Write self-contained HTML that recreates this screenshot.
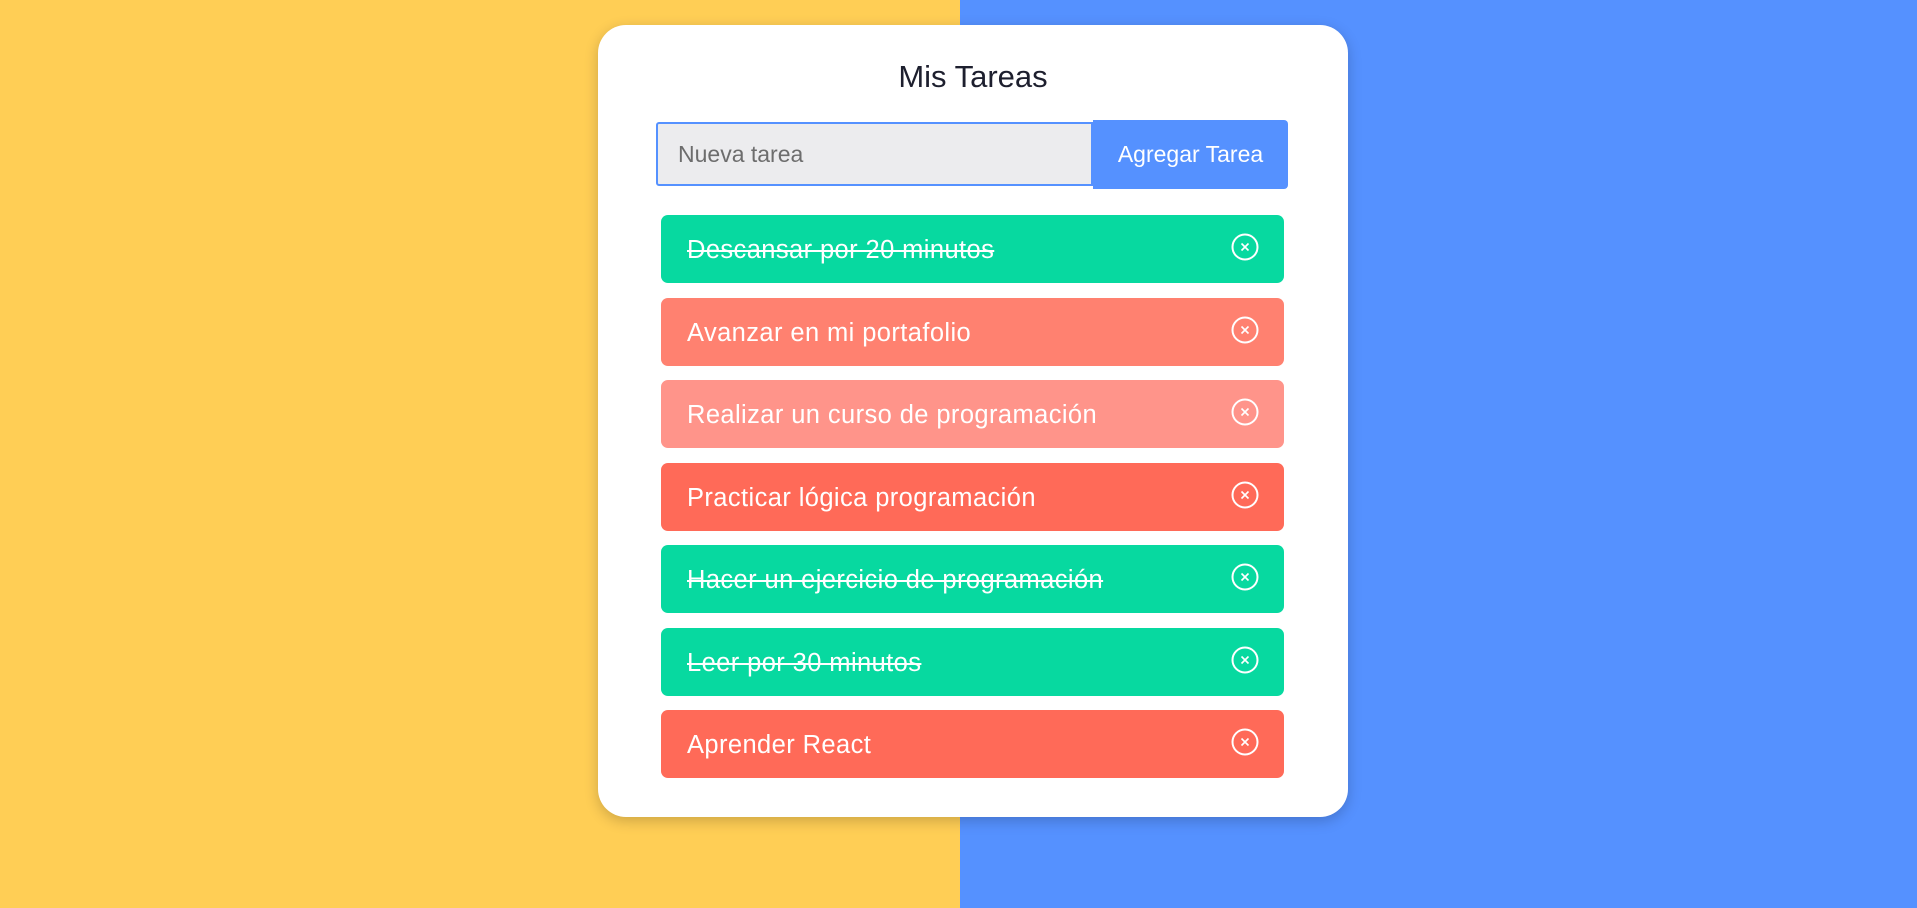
<!DOCTYPE html>
<html><head><meta charset="utf-8"><style>
*{box-sizing:border-box;margin:0;padding:0}
body{width:1917px;height:908px;overflow:hidden;background:linear-gradient(90deg,#ffce55 0 960px,#5591ff 960px);font-family:"Liberation Sans",sans-serif;position:relative}
.card{position:absolute;left:598px;top:25px;width:750px;height:792px;background:#fff;border-radius:28px;box-shadow:0 4px 14px rgba(0,0,0,.2)}
h1{position:absolute;top:34px;left:0;width:100%;text-align:center;font-weight:normal;font-size:31px;color:#1d1f2e}
.inp{position:absolute;left:58px;top:97px;width:437px;height:64px;background:#ececee;border:2px solid #5591ff;border-radius:3px 0 0 3px;font-size:23px;color:#6d6d6d;padding:17px 0 0 20px}
.btn{position:absolute;left:495px;top:95px;width:195px;height:69px;background:#5591ff;border-radius:0 4px 4px 0;color:#fff;font-size:23px;text-align:center;line-height:69px}
.t{position:absolute;left:63px;width:623px;height:68px;border-radius:7px;color:#fff;font-size:25.5px;letter-spacing:0.4px;padding:0 0 0 26px;line-height:70px}
.t s{text-decoration-thickness:2px}
.t svg{position:absolute;right:25px;top:18px}
.g{background:#07d9a0}.a{background:#ff8170}.b{background:#ff948a}.c{background:#ff6a58}
</style></head><body>
<div class="card">
<h1>Mis Tareas</h1>
<div class="inp">Nueva tarea</div>
<div class="btn">Agregar Tarea</div>
</div>
<div style="position:absolute;left:598px;top:25px">
<div class="t g" style="top:190px"><s>Descansar por 20 minutos</s><svg width="28" height="28" viewBox="0 0 28 28"><circle cx="14" cy="14" r="12.5" fill="none" stroke="#fff" stroke-width="2"/><path d="M10.5 10.5l7 7M17.5 10.5l-7 7" stroke="#fff" stroke-width="1.6"/></svg></div>
<div class="t a" style="top:272.5px">Avanzar en mi portafolio<svg width="28" height="28" viewBox="0 0 28 28"><circle cx="14" cy="14" r="12.5" fill="none" stroke="#fff" stroke-width="2"/><path d="M10.5 10.5l7 7M17.5 10.5l-7 7" stroke="#fff" stroke-width="1.6"/></svg></div>
<div class="t b" style="top:355px">Realizar un curso de programación<svg width="28" height="28" viewBox="0 0 28 28"><circle cx="14" cy="14" r="12.5" fill="none" stroke="#fff" stroke-width="2"/><path d="M10.5 10.5l7 7M17.5 10.5l-7 7" stroke="#fff" stroke-width="1.6"/></svg></div>
<div class="t c" style="top:437.5px">Practicar lógica programación<svg width="28" height="28" viewBox="0 0 28 28"><circle cx="14" cy="14" r="12.5" fill="none" stroke="#fff" stroke-width="2"/><path d="M10.5 10.5l7 7M17.5 10.5l-7 7" stroke="#fff" stroke-width="1.6"/></svg></div>
<div class="t g" style="top:520px"><s>Hacer un ejercicio de programación</s><svg width="28" height="28" viewBox="0 0 28 28"><circle cx="14" cy="14" r="12.5" fill="none" stroke="#fff" stroke-width="2"/><path d="M10.5 10.5l7 7M17.5 10.5l-7 7" stroke="#fff" stroke-width="1.6"/></svg></div>
<div class="t g" style="top:602.5px"><s>Leer por 30 minutos</s><svg width="28" height="28" viewBox="0 0 28 28"><circle cx="14" cy="14" r="12.5" fill="none" stroke="#fff" stroke-width="2"/><path d="M10.5 10.5l7 7M17.5 10.5l-7 7" stroke="#fff" stroke-width="1.6"/></svg></div>
<div class="t c" style="top:685px">Aprender React<svg width="28" height="28" viewBox="0 0 28 28"><circle cx="14" cy="14" r="12.5" fill="none" stroke="#fff" stroke-width="2"/><path d="M10.5 10.5l7 7M17.5 10.5l-7 7" stroke="#fff" stroke-width="1.6"/></svg></div>
</div>
</body></html>
